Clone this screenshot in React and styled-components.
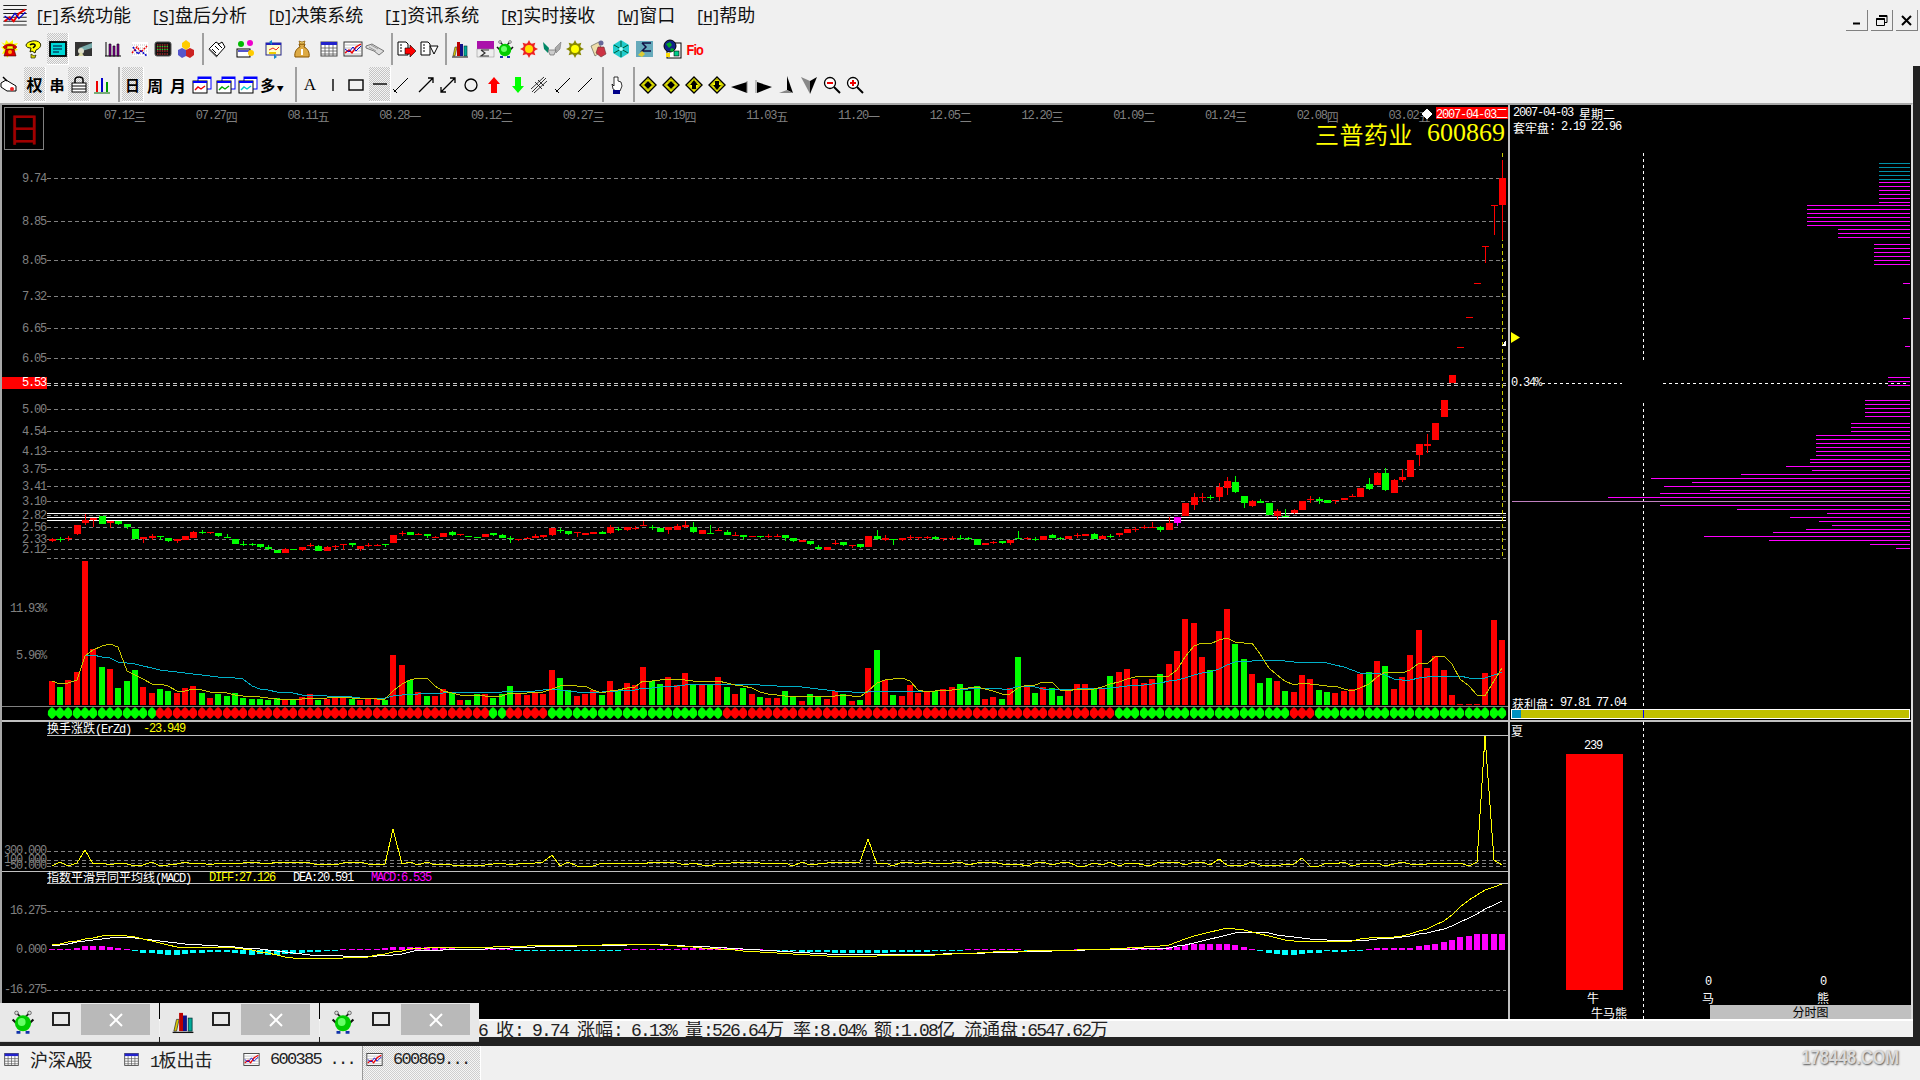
import React from 'react'
import styled, { createGlobalStyle, css } from 'styled-components'

const GlobalStyle = createGlobalStyle`
  html, body { margin: 0; padding: 0; background: #f0f0f0; }
  body { width: 1920px; height: 1080px; overflow: hidden; }
`

const monoFont = css`
  font-family: 'Liberation Mono', 'Noto Sans CJK SC', monospace;
  letter-spacing: -0.1em;
`
const Han = styled.span`
  letter-spacing: 0;
  font-family: 'Noto Sans CJK SC', sans-serif;
`
const HanSpan = styled.tspan`
  letter-spacing: 0;
  font-family: 'Noto Sans CJK SC', sans-serif;
`

// bitmap song font is half width for latin, so latin is squeezed and han left alone
function Txt({ children }) {
  return String(children)
    .split(/([\u4e00-\u9fff]+)/)
    .map((p, i) => (i % 2 ? <Han key={i}>{p}</Han> : p))
}
function SvgTxt({ children }) {
  return String(children)
    .split(/([\u4e00-\u9fff]+)/)
    .map((p, i) => (i % 2 ? <HanSpan key={i}>{p}</HanSpan> : p))
}

/* ---------- data ---------- */
const X = (i) => Math.round(51.5 + 8.336 * i)
const Y = (v) => Math.round(500 + v / 3)

// color, body top, body bottom, high, low (units: 1/3 px from y=500)
const CANDLES = [
  ['R',117,123,115,125],['G',118,118,110,125],['R',115,115,108,123],['R',75,103,75,106],['R',60,68,42,75],
  ['R',54,60,54,80],['G',48,72,48,72],['R',63,70,63,84],['G',63,72,63,75],['G',72,81,72,87],
  ['G',87,117,87,117],['R',111,117,111,129],['R',108,114,102,120],['G',108,108,108,120],['G',114,123,114,126],
  ['R',118,123,118,129],['R',108,120,108,120],['R',96,114,93,114],['G',96,96,90,102],['R',97,97,97,102],
  ['G',98,108,98,111],['G',111,111,102,111],['G',117,132,117,132],['G',132,132,123,138],['G',133,133,130,138],
  ['G',132,141,132,144],['G',141,147,136,150],['G',150,159,150,159],['R',148,159,144,159],['G',148,148,148,151],
  ['R',142,150,142,153],['R',135,135,129,141],['G',138,153,135,153],['R',141,153,138,153],['R',139,139,135,147],
  ['R',133,133,133,150],['G',129,136,129,141],['R',138,147,138,153],['R',134,134,129,141],['R',135,135,132,138],
  ['G',133,133,133,141],['R',105,129,105,129],['R',100,100,93,108],['G',96,105,96,105],['R',103,103,100,106],
  ['G',102,108,102,114],['R',111,111,108,114],['R',99,111,99,111],['G',97,105,94,107],['R',102,102,102,108],
  ['G',107,107,107,111],['G',111,111,111,114],['R',101,111,101,111],['G',99,105,99,107],['G',105,114,103,114],
  ['G',115,115,108,129],['R',116,116,116,122],['R',115,115,111,118],['R',108,114,102,114],['R',105,111,105,113],
  ['R',84,105,84,107],['G',90,90,84,99],['G',93,102,93,105],['R',97,97,97,111],['R',98,105,98,105],
  ['R',96,102,96,102],['G',96,102,93,102],['R',81,99,75,102],['G',87,87,81,93],['R',81,90,81,93],
  ['R',83,83,78,90],['R',76,76,63,78],['G',82,82,75,90],['G',84,96,84,96],['R',82,90,82,102],
  ['R',78,90,72,90],['R',75,81,63,84],['G',81,96,66,99],['R',90,102,90,102],['G',98,98,75,102],
  ['R',90,90,84,93],['G',96,105,90,105],['R',106,106,96,108],['G',104,110,104,119],['R',109,109,109,112],
  ['G',109,109,109,113],['R',107,107,102,113],['R',107,107,102,111],['G',105,114,105,122],['G',114,123,114,125],
  ['R',120,126,120,126],['G',123,132,123,135],['G',141,148,135,148],['R',141,150,141,150],['R',130,130,120,135],
  ['G',126,135,126,138],['R',136,136,136,144],['G',132,141,132,144],['R',108,141,108,141],['G',108,117,90,120],
  ['R',114,120,105,123],['G',118,118,118,135],['R',114,120,114,123],['R',112,112,105,120],['R',112,112,112,120],
  ['R',112,112,108,118],['G',110,117,108,119],['R',114,118,114,123],['R',113,113,108,120],['G',113,113,105,120],
  ['G',115,115,112,120],['G',117,135,117,135],['R',129,135,129,135],['R',127,127,123,132],['G',123,129,123,132],
  ['R',120,129,120,135],['G',113,113,93,113],['R',114,117,111,119],['G',116,116,111,122],['R',108,120,108,120],
  ['G',105,114,102,114],['G',115,115,112,120],['R',108,118,108,118],['R',106,106,99,114],['R',102,108,102,108],
  ['G',102,117,99,117],['R',108,118,106,118],['G',108,108,101,115],['R',99,105,99,110],['R',87,99,87,99],
  ['R',88,88,81,95],['R',81,81,75,87],['R',82,82,66,84],['G',81,90,77,95],['R',69,90,51,90],
  ['M',51,69,51,78],['R',9,48,9,48],['R',-9,15,-21,30],['R',-9,-9,-21,6],['G',-9,-9,-15,0],
  ['R',-39,-9,-50,3],['R',-57,-36,-69,-15],['G',-54,-24,-72,-21],['G',-12,9,-12,24],['R',3,18,0,21],
  ['G',3,9,-3,9],['G',9,45,9,45],['R',33,48,27,60],['G',47,47,27,48],['R',30,39,27,42],
  ['R',3,30,3,30],['R',-3,-3,-12,9],['G',-3,3,-9,12],['G',0,9,0,9],['R',1,1,1,12],
  ['R',-6,0,-6,0],['R',-11,-11,-18,-9],['R',-36,-9,-36,-9],['G',-48,-33,-66,-30],['R',-81,-45,-84,-45],
  ['G',-81,-30,-96,-27],['R',-60,-21,-63,-21],['R',-69,-60,-93,-54],['R',-120,-69,-120,-69],['R',-168,-135,-168,-102],
  ['R',-168,-162,-198,-141],['R',-231,-180,-231,-180],['R',-300,-249,-300,-249],['R',-375,-351,-375,-351],['R',-459,-459,-459,-459],
  ['R',-549,-549,-549,-549],['R',-651,-651,-651,-651],['R',-762,-762,-762,-711],['R',-885,-885,-885,-795],['R',-966,-885,-1020,-780],
]

const VOLS = [
  543,560,540,516,183,447,501,507,564,543,510,561,579,567,573,579,564,558,579,594,582,588,579,594,597,
  597,600,594,600,600,591,582,600,597,591,591,597,600,597,597,600,465,495,540,576,588,588,567,576,600,
  600,582,582,594,582,558,580,585,576,582,510,534,570,588,582,570,585,543,570,549,555,501,543,552,531,
  555,519,552,555,552,531,561,582,564,582,591,594,594,573,588,603,582,588,597,573,582,603,600,504,450,
  540,585,588,555,579,576,573,568,561,552,573,558,597,591,597,564,471,558,579,561,564,588,573,552,552,
  567,568,528,516,507,537,549,537,522,492,453,357,369,471,510,393,327,432,477,522,549,534,543,573,576,
  525,537,570,576,579,573,567,522,516,483,498,567,531,465,390,504,468,510,585,612,612,612,519,360,420,
]

const GREEN_RUNS = [[0, 12], [53, 54], [60, 80], [128, 148], [152, 174]]
const isGreenDot = (i) => GREEN_RUNS.some(([a, b]) => i >= a && i <= b)

const movingAvg = (n) =>
  VOLS.map((_, i) => {
    const from = Math.max(0, i - n + 1)
    const part = VOLS.slice(from, i + 1)
    const h = part.reduce((s, v) => s + (615 - v), 0) / part.length
    return `${X(i)},${Math.round(500 + (615 - h) / 3)}`
  }).join(' ')

const interp = (pts, i) => {
  for (let k = 0; k < pts.length - 1; k++) {
    const [a, va] = pts[k]
    const [b, vb] = pts[k + 1]
    if (i >= a && i <= b) return va + ((vb - va) * (i - a)) / (b - a)
  }
  return pts[pts.length - 1][1]
}

const DIFF = [[0,945],[7,935],[8.6,935],[11.5,940],[15,947],[21,947],[24.6,951],[27.5,956],[29,958],[32,958],[38,957],[41,952],[43,949],[46.6,947],[51,947],[60,945],[72,944],[82,950],[94,956],[105,955],[115,951],[126,949],[130,947],[134,945],[137,936],[141,928],[143,930],[145.5,935],[148.7,941],[156,941],[158.4,937],[161.6,937],[165.6,927],[167.6,918],[169.6,902],[172,890],[174,884]]
const DEA = [[0,946],[6.6,938],[9,937],[15,943],[21,946],[25,949],[31.4,955],[38,956],[41.4,955],[43.7,950],[51,949],[60,946],[72,944],[82,948],[94,954],[105,954],[115,952],[126,949],[134,948],[138,941],[142.7,932],[145,932],[149.7,938],[153.7,940],[158,940],[163,936],[167.6,928],[170.8,915],[172.4,907],[174,901]]
const HIST = [0,1,1,2,4,4,4,3,1.5,.5,-.5,-3,-3,-4,-5,-5,-3.5,-3,-3,-2,-2,-1.5,-3,-4,-4.5,-4,-4.5,-5,-4,-4,-2.5,-1.5,-1.5,-1,-.5,.5,.5,.5,1,1,2,3,3,3,3,3,2,2,1.5,1,1,.5]
const HIST_MID = [[52,1],[58,-1],[65,-1],[72,1],[80,2],[88,-1],[96,-3],[104,-2],[112,1],[120,-1],[126,1]]
const HIST_END = [1,1,1,2,2,2,2,2,3,3,5,6,6,6,6,6,5,3,1,-.5,-2.5,-4,-5,-5,-4,-3,-3,-1,-1.5,-1.5,-1,-1,.5,2,1.5,1.5,1.5,2,4,5,6,8,10,13,14,16,16,16,16]
const histAt = (i) => (i < 52 ? HIST[i] : i < 126 ? interp(HIST_MID, i) : HIST_END[i - 126])

const SPIKES = { 4: 850, 41: 829, 60: 855, 98: 839, 140: 859, 150: 858, 171: 862, 172: 736, 173: 860, 174: 865 }
const erzdLine = CANDLES.map((_, i) => {
  const r = Math.abs(Math.sin(i * 12.9898) * 43758.5453) % 1
  return `${X(i)},${SPIKES[i] ?? Math.round(866 - r * 4.5)}`
}).join(' ')

const linePoints = (pts) => CANDLES.map((_, i) => `${X(i)},${Math.round(interp(pts, i))}`).join(' ')

const PRICE_LINES = [
  ['9.74', 178], ['8.85', 221], ['8.05', 260], ['7.32', 296], ['6.65', 328], ['6.05', 358],
  ['5.00', 409], ['4.54', 431], ['4.13', 451], ['3.75', 469], ['3.41', 486], ['3.10', 501],
  ['2.82', 515], ['2.56', 527], ['2.33', 539], ['2.12', 549], ['', 558],
]
const DATES = ['07.12三','07.27四','08.11五','08.28一','09.12二','09.27三','10.19四','11.03五','11.20一','12.05二','12.20三','01.09二','01.24三','02.08四','03.02五']

const CHIPS = [
  ...[163,167,171,175,179].map((y) => [y, 1879, '#0090a8']),
  ...[182,186,190,194,198,202].map((y) => [y, 1879]),
  ...[205,209,213,217,221,225].map((y) => [y, 1807]),
  ...[229,233,237].map((y) => [y, 1838]),
  ...[244,248,252,256,260,264].map((y) => [y, 1874]),
  [283,1903],[318,1903],[346,1905],[377,1888],[381,1888],[385,1888],
  ...[400,404,408,412,416].map((y) => [y, 1865]),
  ...[423,427,431].map((y) => [y, 1851]),
  ...[435,439,443,447,451,455].map((y) => [y, 1816]),
  [459,1810],[462,1810],[466,1786],[470,1812],[474,1741],[478,1651],[482,1692],[486,1664],[490,1710],[493,1660],
  [497,1608],[501,1512,'#c080c0'],[505,1660],[509,1737],[513,1827],[517,1790],[521,1819],[525,1832],[529,1806],[532,1773],
  [536,1704],[540,1769],[544,1870],[548,1896],
]

/* ---------- layout ---------- */
const Root = styled.div`
  position: relative;
  width: 1920px;
  height: 1080px;
  display: flex;
  flex-direction: column;
  background: #f0f0f0;
  overflow: hidden;
`
const MenuBar = styled.div`
  height: 32px;
  box-sizing: border-box;
  padding: 0 0 5px 2px;
  display: flex;
  align-items: center;
  gap: 20px;
  color: #000;
  font-size: 16px;
  ${monoFont};
`
const MenuItem = styled.div`
  white-space: nowrap;
  color: #111;
  u { text-underline-offset: 2px; }
  ${Han} { font-size: 18px; }
`
const AppLogo = styled.div`
  width: 26px;
  height: 26px;
  margin: 4px -13px 0 0;
`
const WinButtons = styled.div`
  margin-left: auto;
  display: flex;
  gap: 3px;
  padding-right: 2px;
  align-self: flex-start;
  margin-top: 10px;
`
const WinButton = styled.div`
  width: 22px;
  height: 21px;
  background: #f0f0f0;
  border-right: 1px solid #808080;
  border-bottom: 1px solid #808080;
  box-sizing: border-box;
  display: flex;
  align-items: center;
  justify-content: center;
`
const ToolRow = styled.div`
  height: ${(p) => p.$h}px;
  margin-left: ${(p) => p.$shift}px;
  display: flex;
  align-items: stretch;
  flex: 0 0 auto;
`
const ToolSlot = styled.div`
  flex: 0 0 auto;
  width: ${(p) => p.$w}px;
  padding: 1px 0 1px;
  box-sizing: border-box;
`
const ToolFace = styled.div`
  width: 22px;
  height: 100%;
  display: flex;
  align-items: center;
  justify-content: center;
  box-sizing: border-box;
  ${(p) =>
    p.$active &&
    css`
      background: repeating-conic-gradient(#c4c4c4 0 25%, #f4f4f4 0 50%) 0 0 / 2px 2px;
      border-right: 1px solid #fff;
      border-bottom: 1px solid #fff;
    `}
`
const ToolSep = styled.div`
  width: 2px;
  height: 100%;
  background: #a0a0a0;
`
const Glyph = styled.span`
  font-family: ${(p) => (p.$serif ? "'Liberation Serif'" : "'Noto Sans CJK SC'")}, sans-serif;
  font-weight: ${(p) => (p.$thin ? 400 : 700)};
  font-size: ${(p) => p.$size || 16}px;
  line-height: 1;
  color: ${(p) => p.$color || '#000'};
  white-space: nowrap;
`
const FioMark = styled.span`
  font-family: 'Liberation Sans', sans-serif;
  font-weight: 700;
  font-size: 15px;
  letter-spacing: -1px;
  color: #f00;
  transform: scaleX(0.85);
`
const WorkFrame = styled.div`
  flex: 0 0 auto;
  border-right: 7px solid #222;
  border-bottom: 9px solid #222;
`
const Main = styled.div`
  height: 914px;
  display: flex;
  background: #000;
  border-top: 2px solid #a8a8a8;
  border-right: 2px solid #dcdcdc;
`
const LeftPane = styled.div`
  position: relative;
  width: 1506px;
  display: flex;
  flex-direction: column;
  border-left: 2px solid #a8a8a8;
  border-right: 2px solid #c0c0c0;
  flex: 0 0 auto;
`
const RightPane = styled.div`
  position: relative;
  flex: 1;
  display: flex;
  flex-direction: column;
`
const Chart = styled.svg`
  display: block;
  flex: 0 0 auto;
`
const Rule = styled.div`
  flex: 0 0 auto;
  height: ${(p) => p.$h || 1}px;
  background: ${(p) => p.$color || '#c0c0c0'};
`
const IndicatorHead = styled.div`
  flex: 0 0 auto;
  height: ${(p) => p.$h}px;
  margin-left: 45px;
  display: flex;
  gap: ${(p) => p.$gap}px;
  align-items: center;
  border-bottom: 1px solid #c0c0c0;
  box-sizing: border-box;
  font-size: 12px;
  line-height: 12px;
  white-space: nowrap;
  ${monoFont};
`
const HeadText = styled.span`
  color: ${(p) => p.$color || '#fff'};
`
const AxisText = styled.text`
  ${monoFont};
  font-size: 12px;
  fill: ${(p) => p.$color || '#808080'};
  dominant-baseline: central;
`
const TitleTag = styled.div`
  position: absolute;
  right: 3px;
  top: 12px;
  color: #ff0;
  display: flex;
  gap: 14px;
  align-items: center;
  height: 32px;
`
const TitleName = styled.span`
  font-family: 'Noto Sans CJK SC', sans-serif;
  font-size: 24px;
  letter-spacing: 0.5px;
`
const TitleCode = styled.span`
  font-family: 'Liberation Serif', serif;
  font-size: 26px;
`
const DateTag = styled.div`
  position: absolute;
  top: 2px;
  right: 0;
  width: 72px;
  height: 12px;
  background: #f00;
  color: #fff;
  font-size: 12px;
  line-height: 12px;
  white-space: nowrap;
  ${monoFont};
`
const DayBadge = styled.div`
  position: absolute;
  left: 2px;
  top: 2px;
  width: 38px;
  height: 41px;
  border: 1px solid #808080;
  color: #a00000;
  font-family: 'Noto Sans CJK SC', sans-serif;
  font-size: 34px;
  line-height: 39px;
  text-align: center;
`
const TimeButton = styled.div`
  position: absolute;
  left: 200px;
  right: 0;
  bottom: 0;
  height: 14px;
  background: #c0c0c0;
  color: #000;
  font-family: 'Noto Sans CJK SC', sans-serif;
  font-size: 12px;
  line-height: 14px;
  text-align: center;
`
const StatusBar = styled.div`
  height: 16px;
  border-top: 2px solid #fff;
  padding-left: 478px;
  font-size: 18px;
  line-height: 15px;
  white-space: pre;
  color: #222;
  overflow: hidden;
  ${monoFont};
  ${Han} { font-size: 18px; }
`
const TileRow = styled.div`
  position: absolute;
  left: 0;
  top: 1003px;
  display: flex;
  gap: 1px;
`
const Tile = styled.div`
  width: 159px;
  height: 39px;
  background: #e8e8e8;
  display: flex;
  align-items: flex-start;
  border-bottom: 1px solid #d0d0d0;
  box-sizing: border-box;
`
const TileIcon = styled.div`
  width: 26px;
  height: 26px;
  margin: 6px 0 0 10px;
`
const TileSquare = styled.div`
  width: 18px;
  height: 14px;
  border: 2px solid #222;
  box-sizing: border-box;
  margin: 9px 11px 0 16px;
  align-self: flex-start;
`
const TileClose = styled.div`
  width: 69px;
  height: 31px;
  margin-top: 1px;
  background: #b9b9b9;
  color: #fff;
  display: flex;
  align-items: center;
  justify-content: center;
`
const TaskBar = styled.div`
  position: relative;
  flex: 1;
  display: flex;
  align-items: stretch;
  font-size: 17px;
  color: #222;
  ${monoFont};
  ${Han} { font-size: 18px; }
`
const TaskTab = styled.div`
  width: ${(p) => p.$w}px;
  display: flex;
  align-items: center;
  gap: 10px;
  padding: 0 0 15px 3px;
  box-sizing: border-box;
  white-space: pre;
  ${(p) =>
    p.$active &&
    css`
      background: repeating-conic-gradient(#cfcfcf 0 25%, #f6f6f6 0 50%) 0 0 / 2px 2px;
      border-left: 1px solid #999;
      border-right: 1px solid #fff;
    `}
`
const Watermark = styled.div`
  position: absolute;
  right: 21px;
  top: 0;
  font-family: 'Liberation Sans', sans-serif;
  font-weight: 700;
  font-size: 20px;
  letter-spacing: 0;
  line-height: 23px;
  color: #dadada;
  text-shadow: 1px 1px 2px #555;
  transform: scaleX(0.82);
  transform-origin: right center;
`

/* ---------- icons ---------- */
const Ico = ({ children, size = 20, vb = 20 }) => (
  <svg width={size} height={size} viewBox={`0 0 ${vb} ${vb}`}>
    {children}
  </svg>
)
const LogoBody = (
  <>
    <rect x="1" y="2" width="18" height="15" fill="#f4f4f4" />
    <path d="M1 2h18M1 5h18M1 8h18M1 11h18M1 14h18M1 17h18" stroke="#222" strokeWidth=".8" />
    <path d="M2 14l4-3 3 3 4-6 5-3" stroke="#e00" fill="none" strokeWidth="1.5" />
    <path d="M2 10l4 3 4-5 3 4 5-5" stroke="#00c" fill="none" />
  </>
)
const ChartIconBody = (
  <>
    <rect x="1" y="3" width="18" height="14" fill="#fff" stroke="#333" />
    <path d="M1 6h18M1 9h18M1 12h18M1 15h18" stroke="#999" strokeWidth=".6" />
    <path d="M2 14l4-3 3 3 4-6 5-3" stroke="#e00" fill="none" strokeWidth="1.4" />
    <path d="M2 10l4 3 4-5 3 4 5-5" stroke="#00c" fill="none" />
  </>
)
const TableIconBody = (
  <>
    <rect x="2" y="3" width="16" height="14" fill="#fff" stroke="#444" />
    <rect x="2" y="3" width="16" height="3" fill="#22c" />
    <path d="M2 9h16M2 12h16M2 15h16M6 6v11M10 6v11M14 6v11" stroke="#555" strokeWidth=".8" />
  </>
)
const BugBody = (
  <>
    <path d="M5 3l3 3M15 3l-3 3" stroke="#222" strokeWidth="1.4" />
    <circle cx="5" cy="3" r="1.4" fill="#ddd" stroke="#333" strokeWidth=".5" />
    <circle cx="15" cy="3" r="1.4" fill="#ddd" stroke="#333" strokeWidth=".5" />
    <path d="M2 8l3 3M18 8l-3 3" stroke="#111" strokeWidth="1.6" />
    <circle cx="10" cy="11" r="6.2" fill="#0c0" />
    <circle cx="9" cy="10" r="3" fill="#6f6" />
    <path d="M5 17h3v2H5zM12 17h3v2h-3z" fill="#13a" />
  </>
)
const BooksBody = (
  <>
    <path d="M3 17l2-9h2l-2 9z" fill="#dc0" stroke="#333" strokeWidth=".6" />
    <rect x="7" y="3" width="3" height="14" fill="#b00" />
    <rect x="10" y="5" width="3" height="12" fill="#118" />
    <rect x="14" y="7" width="3" height="10" fill="#0a9" stroke="#033" strokeWidth=".6" />
    <path d="M2 18h16" stroke="#111" />
  </>
)
const sun = (ray, fill) => (
  <>
    {[0, 45, 90, 135, 180, 225, 270, 315].map((a) => (
      <path key={a} d="M10 1l2 4h-4z" fill={ray} transform={`rotate(${a} 10 10)`} />
    ))}
    <circle cx="10" cy="10" r="6" fill={ray} />
    <circle cx="10" cy="10" r="4" fill={fill} />
  </>
)
const signDiamond = (arrow) => (
  <>
    <path d="M10 2l8 8-8 8-8-8z" fill="#ff0" stroke="#000" strokeWidth="1.4" />
    <path d="M10 4.5l5.5 5.5-5.5 5.5-5.5-5.5z" fill="none" stroke="#000" strokeDasharray="1 1" strokeWidth=".7" />
    {arrow === 'c' && <path d="M10 6l4 4-4 4-4-4z" fill="#000" />}
    {arrow === 'u' && <path d="M10 5l4 5h-2v4H8v-4H6z" fill="#000" />}
    {arrow === 'd' && <path d="M10 15l4-5h-2V6H8v4H6z" fill="#000" />}
  </>
)
const windowIcon = (line) => (
  <>
    <rect x="6" y="2" width="13" height="12" fill="#fff" stroke="#00f" />
    <rect x="6" y="2" width="13" height="2" fill="#00f" />
    <rect x="1" y="6" width="14" height="12" fill="#fff" stroke="#000" />
    <rect x="1" y="6" width="14" height="2" fill="#00f" />
    <path d="M3 15l3-3 3 2 4-3" stroke={line} fill="none" strokeWidth="1.4" />
  </>
)

const ICONS = {
  logo: LogoBody,
  phone: (
    <>
      <path d="M1 3l4 2 1-4 3 3 4-3v4l5-1-3 4 3 3-4 1 1 5-5-2-3 4-1-5-4 1 2-4-3-3 4-1z" fill="#ff0" />
      <path d="M3 8c3-4 11-4 14 0l-2 2-2-1v-2H7v2l-2 1z" fill="#d00" stroke="#600" strokeWidth=".5" />
      <path d="M6 10h8l2 7H4z" fill="#d00" stroke="#400" strokeWidth=".6" />
      <circle cx="10" cy="13" r="2" fill="#fa0" />
    </>
  ),
  help: (
    <>
      <path d="M3 6c1-4 11-6 14-2 2 3-1 6-4 7l-1 3-3-2-2 1 1-4C5 9 3 8 3 6z" fill="#ff0" stroke="#220" />
      <path d="M8 15l3 2 2-1-1 3H8z" fill="#dd0" stroke="#220" strokeWidth=".7" />
      <path d="M7 6c2-2 6-1 5 1l-2 2" fill="none" stroke="#000" strokeWidth="1.5" />
    </>
  ),
  screen: (
    <>
      <rect x="2" y="3" width="16" height="14" fill="#00d8d8" stroke="#000" strokeWidth="1.8" />
      <path d="M5 7h9M5 10h9M5 13h6" stroke="#003" strokeWidth="1.2" />
    </>
  ),
  photo: (
    <>
      <rect x="2" y="3" width="17" height="14" fill="#333" />
      <path d="M6 9L19 4v5L9 12z" fill="#7aa" />
      <circle cx="8" cy="12" r="3" fill="#ddc" />
      <path d="M5 17l3-4 3 4z" fill="#dda" />
    </>
  ),
  bars: (
    <>
      <path d="M2 17h16M3 3v14" stroke="#000" strokeWidth="1" />
      <path d="M6 5h2v12H6zM10 7h2v10h-2zM14 5h2v12h-2z" fill="#809" stroke="#000" strokeWidth=".6" />
    </>
  ),
  chartx: (
    <>
      <rect x="2" y="3" width="16" height="14" fill="#fff" />
      <path d="M2 6h16M2 9h16M2 12h16M2 15h16" stroke="#bbb" strokeDasharray="1 1" />
      <path d="M2 14l5-6 4 5 6-6" stroke="#e00" fill="none" strokeWidth="1.5" strokeDasharray="2 1" />
      <path d="M3 8l5 7 3-3 6 5" stroke="#00c" fill="none" strokeWidth="1.5" strokeDasharray="2 1" />
    </>
  ),
  grid: (
    <>
      <rect x="2" y="3" width="16" height="14" rx="2" fill="#111" stroke="#555" />
      <path d="M4 6h12M4 9h12M4 12h12M4 15h12" stroke="#e33" strokeDasharray="1.4 1" />
      <path d="M4 7.5h12M4 10.5h12" stroke="#3c3" strokeDasharray="1.4 1" />
    </>
  ),
  people: (
    <>
      <path d="M10 1l4 3v4l-4 3-4-3V4z" fill="#fc0" />
      <path d="M6 9l4 2v6l-4 2-4-3v-5z" fill="#55c" />
      <path d="M14 9l4 2v5l-4 3-4-2v-6z" fill="#c22" />
    </>
  ),
  hands: (
    <>
      <path d="M2 10l7-7 3 2 3-2 3 5-8 9z" fill="#fff" stroke="#000" />
      <path d="M5 10l4 4M8 7l4 4M11 5l4 4" stroke="#000" />
      <path d="M2 10l8 8" stroke="#555" strokeWidth="1.4" />
    </>
  ),
  balls: (
    <>
      <rect x="2" y="10" width="13" height="8" fill="#fff" stroke="#000" />
      <path d="M3 12h11" stroke="#55c" strokeWidth="2" />
      <circle cx="6" cy="5" r="3" fill="#0b0" />
      <circle cx="15" cy="4" r="3" fill="#e0c" />
      <circle cx="16" cy="14" r="3" fill="#fc0" />
    </>
  ),
  swap: (
    <>
      <rect x="3" y="4" width="15" height="12" fill="#ffc" stroke="#228" />
      <rect x="3" y="4" width="15" height="2" fill="#22b" />
      <path d="M6 3l3-2v5zM14 18l-3 2v-5z" fill="#18c" />
      <path d="M6 11l4-2 3 2 3-3" stroke="#e22" fill="none" />
      <path d="M6 14h7" stroke="#ec0" strokeWidth="2" />
    </>
  ),
  bag: (
    <>
      <path d="M7 5h6l-1 3c3 1 6 5 5 10H3C2 13 5 9 8 8z" fill="#da4" stroke="#850" />
      <path d="M7 2l3 1 3-1-1 3H8z" fill="#ec6" stroke="#850" strokeWidth=".7" />
      <path d="M10 10v6" stroke="#fff" strokeWidth="2" />
    </>
  ),
  table: TableIconBody,
  chart: ChartIconBody,
  book: (
    <>
      <path d="M1 7l6-2 5 3 7 4-5 4-5-4-8-3z" fill="#ddd" stroke="#777" />
      <path d="M6 6l7 4M4 8l7 4" stroke="#999" />
    </>
  ),
  docin: (
    <>
      <path d="M2 3h8l2 2v11H2z" fill="#fff" stroke="#000" />
      <path d="M4 6h2M4 9h2M4 12h2" stroke="#000" />
      <path d="M9 9h5V6l6 6-6 6v-3H9z" fill="#f00" stroke="#000" strokeWidth=".6" />
    </>
  ),
  docout: (
    <>
      <path d="M2 3h7l2 2v11H2z" fill="#fff" stroke="#000" />
      <path d="M4 6h2M4 9h2M4 12h2" stroke="#000" />
      <path d="M11 7h8l-4 8z" fill="#fff" stroke="#000" />
    </>
  ),
  books: BooksBody,
  sigma: (
    <>
      <rect x="2" y="2" width="17" height="8" fill="#a1a" />
      <rect x="2" y="10" width="17" height="8" fill="#eee" stroke="#888" strokeWidth=".5" />
      <path d="M6 11h8M6 11l4 3-4 3h8" fill="none" stroke="#333" strokeWidth="1.2" />
    </>
  ),
  bug: BugBody,
  sunred: sun('#e22', '#fd0'),
  wing: (
    <>
      <path d="M1 3l6 6-1 5-4-4z" fill="#086" />
      <path d="M19 3l-6 6 1 5 4-4z" fill="#aaa" stroke="#666" strokeWidth=".5" />
      <path d="M6 11h8l-2 5H8z" fill="#ccc" stroke="#555" strokeWidth=".6" />
    </>
  ),
  sunyel: sun('#880', '#ff0'),
  lab: (
    <>
      <path d="M3 7l8-4 3 9-7 5z" fill="#eda" stroke="#665" strokeWidth=".7" />
      <circle cx="13" cy="4" r="2.5" fill="#669" />
      <path d="M10 8l6 0 2 7-5 3-5-4z" fill="#c34" stroke="#633" strokeWidth=".6" />
    </>
  ),
  snow: (
    <>
      <path d="M10 1l8 5v8l-8 5-8-5V6z" fill="#2cc" />
      <path d="M10 2v16M3 6l14 8M17 6L3 14" stroke="#053" strokeWidth="1" />
      <circle cx="10" cy="10" r="2" fill="#aff" />
    </>
  ),
  sigmab: (
    <>
      <rect x="2" y="2" width="17" height="16" fill="#6ab" />
      <path d="M8 4h9M8 4l4 4-4 4h9" fill="none" stroke="#114" strokeWidth="1.5" />
      <path d="M4 16l4-4 3 3-3 3z" fill="#dc3" />
    </>
  ),
  globe: (
    <>
      <rect x="5" y="4" width="14" height="15" fill="#fff" stroke="#000" />
      <circle cx="8" cy="7" r="6" fill="#128" stroke="#000" />
      <path d="M4 5l4-2 2 3-3 3zM9 9l3 1-1 3-3-1z" fill="#0a2" />
      <rect x="12" y="12" width="5" height="5" fill="#0c8" stroke="#000" strokeWidth=".6" />
      <path d="M4 14h4v4H4z" fill="#fd0" />
    </>
  ),
  tag: (
    <>
      <path d="M2 8l5-3 10 6v5H8L2 12z" fill="#fff" stroke="#000" />
      <circle cx="13" cy="14" r="2" fill="#e22" />
      <path d="M4 2l4 4" stroke="#000" strokeWidth="1.5" />
    </>
  ),
  lock: (
    <>
      <path d="M6 9V6c0-4 8-4 8 0v3" fill="none" stroke="#000" strokeWidth="1.5" />
      <rect x="3" y="9" width="14" height="9" fill="#fff" stroke="#000" />
      <path d="M3 12h14M3 15h14" stroke="#000" />
    </>
  ),
  rgb: (
    <>
      <path d="M5 6v11" stroke="#e00" strokeWidth="2" />
      <path d="M10 3v14" stroke="#00c" strokeWidth="2" />
      <path d="M15 7v10" stroke="#090" strokeWidth="2" />
      <path d="M2 18h16" stroke="#060" />
    </>
  ),
  winred: windowIcon('#e00'),
  winblk: windowIcon('#0a0'),
  wincyan: windowIcon('#0cc'),
  vbar: <path d="M10 4v12" stroke="#000" strokeWidth="1.4" />,
  rect: <rect x="3" y="5" width="14" height="10" fill="none" stroke="#000" strokeWidth="1.4" />,
  dash: <path d="M3 10h14" stroke="#000" strokeWidth="1.4" />,
  seg: <path d="M3 17L17 3M2 14l4 4" stroke="#000" fill="none" />,
  ray: <path d="M3 17L17 3M12 3h5v5" stroke="#000" fill="none" strokeWidth="1.3" />,
  both: <path d="M3 17L17 3M12 3h5v5M3 12v5h5" stroke="#000" fill="none" strokeWidth="1.3" />,
  circle: <circle cx="10" cy="10" r="6" fill="none" stroke="#000" strokeWidth="1.3" />,
  up: <path d="M10 2l6 7h-3v9H7V9H4z" fill="#f00" />,
  down: <path d="M10 18l6-7h-3V2H7v9H4z" fill="#0f0" />,
  cross: <path d="M3 17L17 3M5 18L18 6M2 14L15 2M6 7l7 7M9 5l6 6" stroke="#000" fill="none" strokeWidth=".8" />,
  tick: <path d="M3 17L17 3M2 14l4 4" stroke="#000" fill="none" />,
  line: <path d="M3 17L17 3" stroke="#000" fill="none" />,
  hand: (
    <>
      <path d="M7 2v9L5 9l1 5 3 2h4l2-5-1-4-3-1V2z" fill="#fff" stroke="#000" strokeWidth=".8" />
      <rect x="6" y="15" width="7" height="4" fill="#008" />
    </>
  ),
  sign1: signDiamond('c'),
  sign2: signDiamond('c'),
  sign3: signDiamond('u'),
  sign4: signDiamond('d'),
  arrL: (
    <>
      <path d="M1 12l16-5v11z" fill="#000" />
      <path d="M17 6v12" stroke="#888" />
    </>
  ),
  arrR: (
    <>
      <path d="M19 12L4 7v11z" fill="#000" />
      <path d="M3 5v13" stroke="#888" />
    </>
  ),
  arrU: (
    <>
      <path d="M11 1l6 17-6-3z" fill="#000" />
      <path d="M3 18l8-3 6 3z" fill="#888" />
    </>
  ),
  arrD: (
    <>
      <path d="M11 19l7-17-7 4z" fill="#000" />
      <path d="M2 2l9 4v13z" fill="#888" />
    </>
  ),
  zoomOut: (
    <>
      <circle cx="8" cy="8" r="5.5" fill="#fff" stroke="#000" strokeWidth="1.3" />
      <path d="M5 8h6" stroke="#e00" strokeWidth="2" />
      <path d="M12 12l6 6" stroke="#000" strokeWidth="2" />
    </>
  ),
  zoomIn: (
    <>
      <circle cx="8" cy="8" r="5.5" fill="#fff" stroke="#000" strokeWidth="1.3" />
      <path d="M5 8h6M8 5v6" stroke="#e00" strokeWidth="2" />
      <path d="M12 12l6 6" stroke="#000" strokeWidth="2" />
    </>
  ),
}

const glyph = (t, props) => <Glyph {...props}>{t}</Glyph>
const TEXT_TOOLS = {
  quan: glyph('权', { $size: 16 }),
  chuan: glyph('串', { $size: 15 }),
  ri: glyph('日', { $size: 15 }),
  zhou: glyph('周', { $size: 16 }),
  yue: glyph('月', { $size: 16 }),
  duo: (
    <Glyph $size={15}>
      多<Glyph $size={7} $thin> ▼</Glyph>
    </Glyph>
  ),
  A: glyph('A', { $serif: true, $thin: true, $size: 17 }),
  fio: <FioMark>Fio</FioMark>,
}

// x is the centre of the button in the picture
const ROW1 = [
  [10,'phone'],[33,'help'],[58,'screen',1],[83,'photo'],[113,'bars'],[140,'chartx'],[163,'grid'],[186,'people'],
  [203,'sep'],[217,'hands'],[245,'balls'],[273,'swap'],[302,'bag'],[329,'table'],[353,'chart'],[375,'book'],
  [392,'sep'],[406,'docin'],[429,'docout'],[446,'sep'],[460,'books'],[485,'sigma'],[505,'bug'],[529,'sunred'],
  [552,'wing'],[575,'sunyel'],[598,'lab'],[621,'snow'],[644,'sigmab'],[672,'globe'],[695,'fio'],
]
const ROW2 = [
  [9,'tag'],[35,'quan',1],[57,'chuan'],[79,'lock',1],[102,'rgb'],[119,'sep'],[133,'ri',1],[155,'zhou'],[178,'yue'],
  [202,'winred'],[226,'winblk'],[248,'wincyan'],[272,'duo'],[296,'sep'],[310,'A'],[333,'vbar'],[356,'rect'],
  [380,'dash',1],[401,'seg'],[426,'ray'],[448,'both'],[471,'circle'],[494,'up'],[518,'down'],[539,'cross'],
  [563,'tick'],[585,'line'],[603,'sep'],[617,'hand'],[634,'sep'],[648,'sign1'],[671,'sign2'],[694,'sign3'],
  [717,'sign4'],[740,'arrL'],[763,'arrR'],[786,'arrU'],[809,'arrD'],[832,'zoomOut'],[855,'zoomIn'],
]

function Toolbar({ items, height }) {
  return (
    <ToolRow $h={height} $shift={items[0][0] - 11}>
      {items.map(([x, key, active], i) => {
        const next = items[i + 1] ? items[i + 1][0] : x + 24
        return (
          <ToolSlot key={i} $w={next - x}>
            <ToolFace $active={active}>
              {key === 'sep' ? (
                <ToolSep />
              ) : TEXT_TOOLS[key] ? (
                TEXT_TOOLS[key]
              ) : (
                <Ico>{ICONS[key]}</Ico>
              )}
            </ToolFace>
          </ToolSlot>
        )
      })}
    </ToolRow>
  )
}

/* ---------- charts ---------- */
const candleColor = { R: '#f00', G: '#0f0', M: '#f0f' }

function PriceChart() {
  return (
    <Chart width="1506" height="601" viewBox="2 105 1506 601" shapeRendering="crispEdges">
      {DATES.map((d, i) => (
        <AxisText key={d} x={85 * 1.2245 + i * 91.75} y={116}>
          <SvgTxt>{d}</SvgTxt>
        </AxisText>
      ))}
      <polygon points="1427,108 1432,114 1427,120 1422,114" fill="#fff" />
      {PRICE_LINES.map(([label, y]) => (
        <g key={y}>
          <line x1="47" x2="1506" y1={y + 0.5} y2={y + 0.5} stroke="#808080" strokeDasharray="4 3" />
          {label && (
            <AxisText x="46" y={y + 1} textAnchor="end">
              {label}
            </AxisText>
          )}
        </g>
      ))}
      <rect x="2" y="377" width="45" height="12" fill="#f00" />
      <AxisText x="46" y="383" textAnchor="end" $color="#fff">
        5.53
      </AxisText>
      {[383, 385].map((y) => (
        <line key={y} x1="47" x2="1506" y1={y + 0.5} y2={y + 0.5} stroke="#c8c8c8" strokeDasharray="4 3" />
      ))}
      {[513, 517, 520].map((y) => (
        <rect key={y} x="47" y={y} width="1459" height="1" fill="#fff" />
      ))}
      <line x1="1502.5" x2="1502.5" y1="153" y2="558" stroke="#c8c800" strokeDasharray="4 3" />
      <polygon points="1506,340 1506,346 1502,346" fill="#fff" />

      {CANDLES.map(([c, top, bot, hi, lo], i) => {
        const x = X(i)
        const col = candleColor[c]
        const t = Y(top)
        const b = Y(bot)
        return (
          <g key={i} fill={col}>
            <rect x={x} y={Y(hi)} width="1" height={Math.max(1, Y(lo) - Y(hi))} />
            <rect x={x - 3} y={t} width="7" height={Math.max(1, b - t)} />
          </g>
        )
      })}

      {VOLS.map((v, i) => (
        <rect
          key={i}
          x={X(i) - 3}
          y={Y(v)}
          width="6"
          height={705 - Y(v)}
          fill={CANDLES[i][0] === 'G' ? '#0f0' : '#f00'}
        />
      ))}
      <AxisText x="46" y="609" textAnchor="end">11.93%</AxisText>
      <AxisText x="46" y="656" textAnchor="end">5.96%</AxisText>
      <g fill="none" strokeWidth="1">
        <polyline points={movingAvg(20)} stroke="#00b0c8" />
        <polyline points={movingAvg(5)} stroke="#c8c800" />
      </g>
    </Chart>
  )
}

function DotRow() {
  return (
    <Chart width="1506" height="13" viewBox="2 707 1506 13">
      {CANDLES.map((_, i) => {
        const x = X(i)
        return (
          <polygon
            key={i}
            points={`${x},707 ${x + 2},708.5 ${x + 4},711 ${x + 4.2},715 ${x + 2},717.5 ${x},719 ${x - 2},717.5 ${x - 4.2},715 ${x - 4},711 ${x - 2},708.5`}
            fill={isGreenDot(i) ? '#0f0' : '#f00'}
          />
        )
      })}
    </Chart>
  )
}

function ErzdChart() {
  return (
    <Chart width="1506" height="135" viewBox="2 736 1506 135" shapeRendering="crispEdges">
      {[851, 860, 863, 866].map((y) => (
        <line key={y} x1="47" x2="1506" y1={y + 0.5} y2={y + 0.5} stroke="#808080" strokeDasharray="4 3" />
      ))}
      <AxisText x="46" y="851" textAnchor="end">300.000</AxisText>
      <AxisText x="46" y="860" textAnchor="end">100.000</AxisText>
      <AxisText x="46" y="866" textAnchor="end">-50.000</AxisText>
      <polyline points={erzdLine} fill="none" stroke="#ff0" strokeWidth="1" />
    </Chart>
  )
}

function MacdChart() {
  return (
    <Chart width="1506" height="135" viewBox="2 884 1506 135" shapeRendering="crispEdges">
      {[911, 990].map((y) => (
        <line key={y} x1="47" x2="1506" y1={y + 0.5} y2={y + 0.5} stroke="#808080" strokeDasharray="4 3" />
      ))}
      {CANDLES.map((_, i) => {
        const v = histAt(i)
        const h = Math.max(1, Math.round(Math.abs(v)))
        return (
          <rect
            key={i}
            x={X(i) - 3}
            y={v >= 0 ? 950 - h : 950}
            width="6"
            height={h}
            fill={v >= 0 ? '#f0f' : '#0ff'}
          />
        )
      })}
      <AxisText x="46" y="911" textAnchor="end">16.275</AxisText>
      <AxisText x="46" y="950" textAnchor="end">0.000</AxisText>
      <AxisText x="46" y="990" textAnchor="end">-16.275</AxisText>
      <polyline points={linePoints(DEA)} fill="none" stroke="#fff" />
      <polyline points={linePoints(DIFF)} fill="none" stroke="#ff0" />
    </Chart>
  )
}

function ChipChart() {
  return (
    <Chart width="401" height="615" viewBox="1510 105 401 615" shapeRendering="crispEdges">
      <AxisText x="1513" y="113" $color="#fff"><SvgTxt>2007-04-03 星期二</SvgTxt></AxisText>
      <AxisText x="1513" y="127" $color="#fff"><SvgTxt>套牢盘: 2.19 22.96</SvgTxt></AxisText>
      <line x1="1643.5" x2="1643.5" y1="153" y2="360" stroke="#fff" strokeDasharray="3 3" />
      <line x1="1643.5" x2="1643.5" y1="403" y2="720" stroke="#fff" strokeDasharray="3 3" />
      <line x1="1542" x2="1622" y1="383.5" y2="383.5" stroke="#fff" strokeDasharray="3 3" />
      <line x1="1663" x2="1908" y1="383.5" y2="383.5" stroke="#fff" strokeDasharray="3 3" />
      <AxisText x="1511" y="383" $color="#fff">0.34%</AxisText>
      {CHIPS.map(([y, x, col]) => (
        <rect key={y} x={x} y={y} width={1910 - x} height="1" fill={col || '#f0f'} />
      ))}
      <polygon points="1511,332 1520,337.5 1511,343" fill="#ff0" shapeRendering="auto" />
      <AxisText x="1512" y="703" $color="#fff"><SvgTxt>获利盘: 97.81 77.04</SvgTxt></AxisText>
      <rect x="1511.5" y="709.5" width="398" height="9" fill="#c0c000" stroke="#fff" />
      <rect x="1512" y="710" width="9" height="8" fill="#0090c0" />
      <line x1="1643.5" x2="1643.5" y1="710" y2="718" stroke="#00f" />
    </Chart>
  )
}

function BullChart() {
  return (
    <Chart width="401" height="297" viewBox="1510 722 401 297">
      <line x1="1643.5" x2="1643.5" y1="722" y2="1019" stroke="#fff" strokeDasharray="3 3" shapeRendering="crispEdges" />
      <AxisText x="1511" y="730" $color="#fff"><SvgTxt>夏</SvgTxt></AxisText>
      <rect x="1566" y="754" width="57" height="236" fill="#f00" />
      <AxisText x="1593" y="746" $color="#fff" textAnchor="middle">239</AxisText>
      <AxisText x="1593" y="997" $color="#fff" textAnchor="middle"><SvgTxt>牛</SvgTxt></AxisText>
      <AxisText x="1609" y="1012" $color="#fff" textAnchor="middle"><SvgTxt>牛马熊</SvgTxt></AxisText>
      <AxisText x="1708" y="982" $color="#fff" textAnchor="middle">0</AxisText>
      <AxisText x="1708" y="997" $color="#fff" textAnchor="middle"><SvgTxt>马</SvgTxt></AxisText>
      <AxisText x="1823" y="982" $color="#fff" textAnchor="middle">0</AxisText>
      <AxisText x="1823" y="997" $color="#fff" textAnchor="middle"><SvgTxt>熊</SvgTxt></AxisText>
    </Chart>
  )
}

const MENUS = [
  ['F', '系统功能'],
  ['S', '盘后分析'],
  ['D', '决策系统'],
  ['I', '资讯系统'],
  ['R', '实时接收'],
  ['W', '窗口'],
  ['H', '帮助'],
]
const TILES = [BugBody, BooksBody, BugBody]
const TASKS = [
  [120, TableIconBody, '沪深A股'],
  [120, TableIconBody, '1板出击'],
  [122, ChartIconBody, '600385 ...'],
  [119, ChartIconBody, '600869...', true],
]

export default function App() {
  return (
    <Root>
      <GlobalStyle />
      <MenuBar>
        <AppLogo>
          <Ico size={26}>{ICONS.logo}</Ico>
        </AppLogo>
        {MENUS.map(([k, name]) => (
          <MenuItem key={k}>
            [<u>{k}</u>]<Han>{name}</Han>
          </MenuItem>
        ))}
        <WinButtons>
          <WinButton>
            <svg width="12" height="12" viewBox="0 0 12 12"><path d="M2 9.5h7" stroke="#000" strokeWidth="2" /></svg>
          </WinButton>
          <WinButton>
            <svg width="13" height="13" viewBox="0 0 13 13">
              <path d="M4 1.5h8v7H9.5M1.5 4.5h8v7h-8z" fill="none" stroke="#000" />
              <path d="M4 2h8M1.5 5h8" stroke="#000" strokeWidth="2" />
            </svg>
          </WinButton>
          <WinButton>
            <svg width="13" height="13" viewBox="0 0 13 13"><path d="M2 2l9 9M11 2l-9 9" stroke="#000" strokeWidth="2" /></svg>
          </WinButton>
        </WinButtons>
      </MenuBar>
      <Toolbar items={ROW1} height={34} />
      <WorkFrame>
        <Toolbar items={ROW2} height={37} />
        <Main>
          <LeftPane>
            <DayBadge>日</DayBadge>
            <DateTag><Txt>2007-04-03二</Txt></DateTag>
            <TitleTag>
              <TitleName>三普药业</TitleName>
              <TitleCode>600869</TitleCode>
            </TitleTag>
            <PriceChart />
            <Rule $color="#808080" />
            <DotRow />
            <Rule $h={2} />
            <IndicatorHead $h={14} $gap={12}>
              <HeadText><Txt>换手涨跌(ErZd)</Txt></HeadText>
              <HeadText $color="#ff0">-23.949</HeadText>
            </IndicatorHead>
            <ErzdChart />
            <Rule />
            <IndicatorHead $h={12} $gap={18}>
              <HeadText><Txt>指数平滑异同平均线(MACD)</Txt></HeadText>
              <HeadText $color="#ff0">DIFF:27.126</HeadText>
              <HeadText>DEA:20.591</HeadText>
              <HeadText $color="#f0f">MACD:6.535</HeadText>
            </IndicatorHead>
            <MacdChart />
          </LeftPane>
          <RightPane>
            <ChipChart />
            <Rule $h={2} />
            <BullChart />
            <TimeButton>分时图</TimeButton>
          </RightPane>
        </Main>
        <StatusBar>
          <Txt>6 收: 9.74 涨幅: 6.13% 量:526.64万 率:8.04% 额:1.08亿 流通盘:6547.62万</Txt>
        </StatusBar>
      </WorkFrame>
      <TaskBar>
        {TASKS.map(([w, icon, label, active]) => (
          <TaskTab key={label} $w={w} $active={active}>
            <Ico size={17}>{icon}</Ico>
            <span><Txt>{label}</Txt></span>
          </TaskTab>
        ))}
        <Watermark>178448.COM</Watermark>
      </TaskBar>
      <TileRow>
        {TILES.map((icon, i) => (
          <Tile key={i}>
            <TileIcon>
              <Ico size={26}>{icon}</Ico>
            </TileIcon>
            <TileSquare />
            <TileClose>
              <svg width="14" height="14" viewBox="0 0 14 14"><path d="M1 1l12 12M13 1L1 13" stroke="#fff" strokeWidth="2" /></svg>
            </TileClose>
          </Tile>
        ))}
      </TileRow>
    </Root>
  )
}
